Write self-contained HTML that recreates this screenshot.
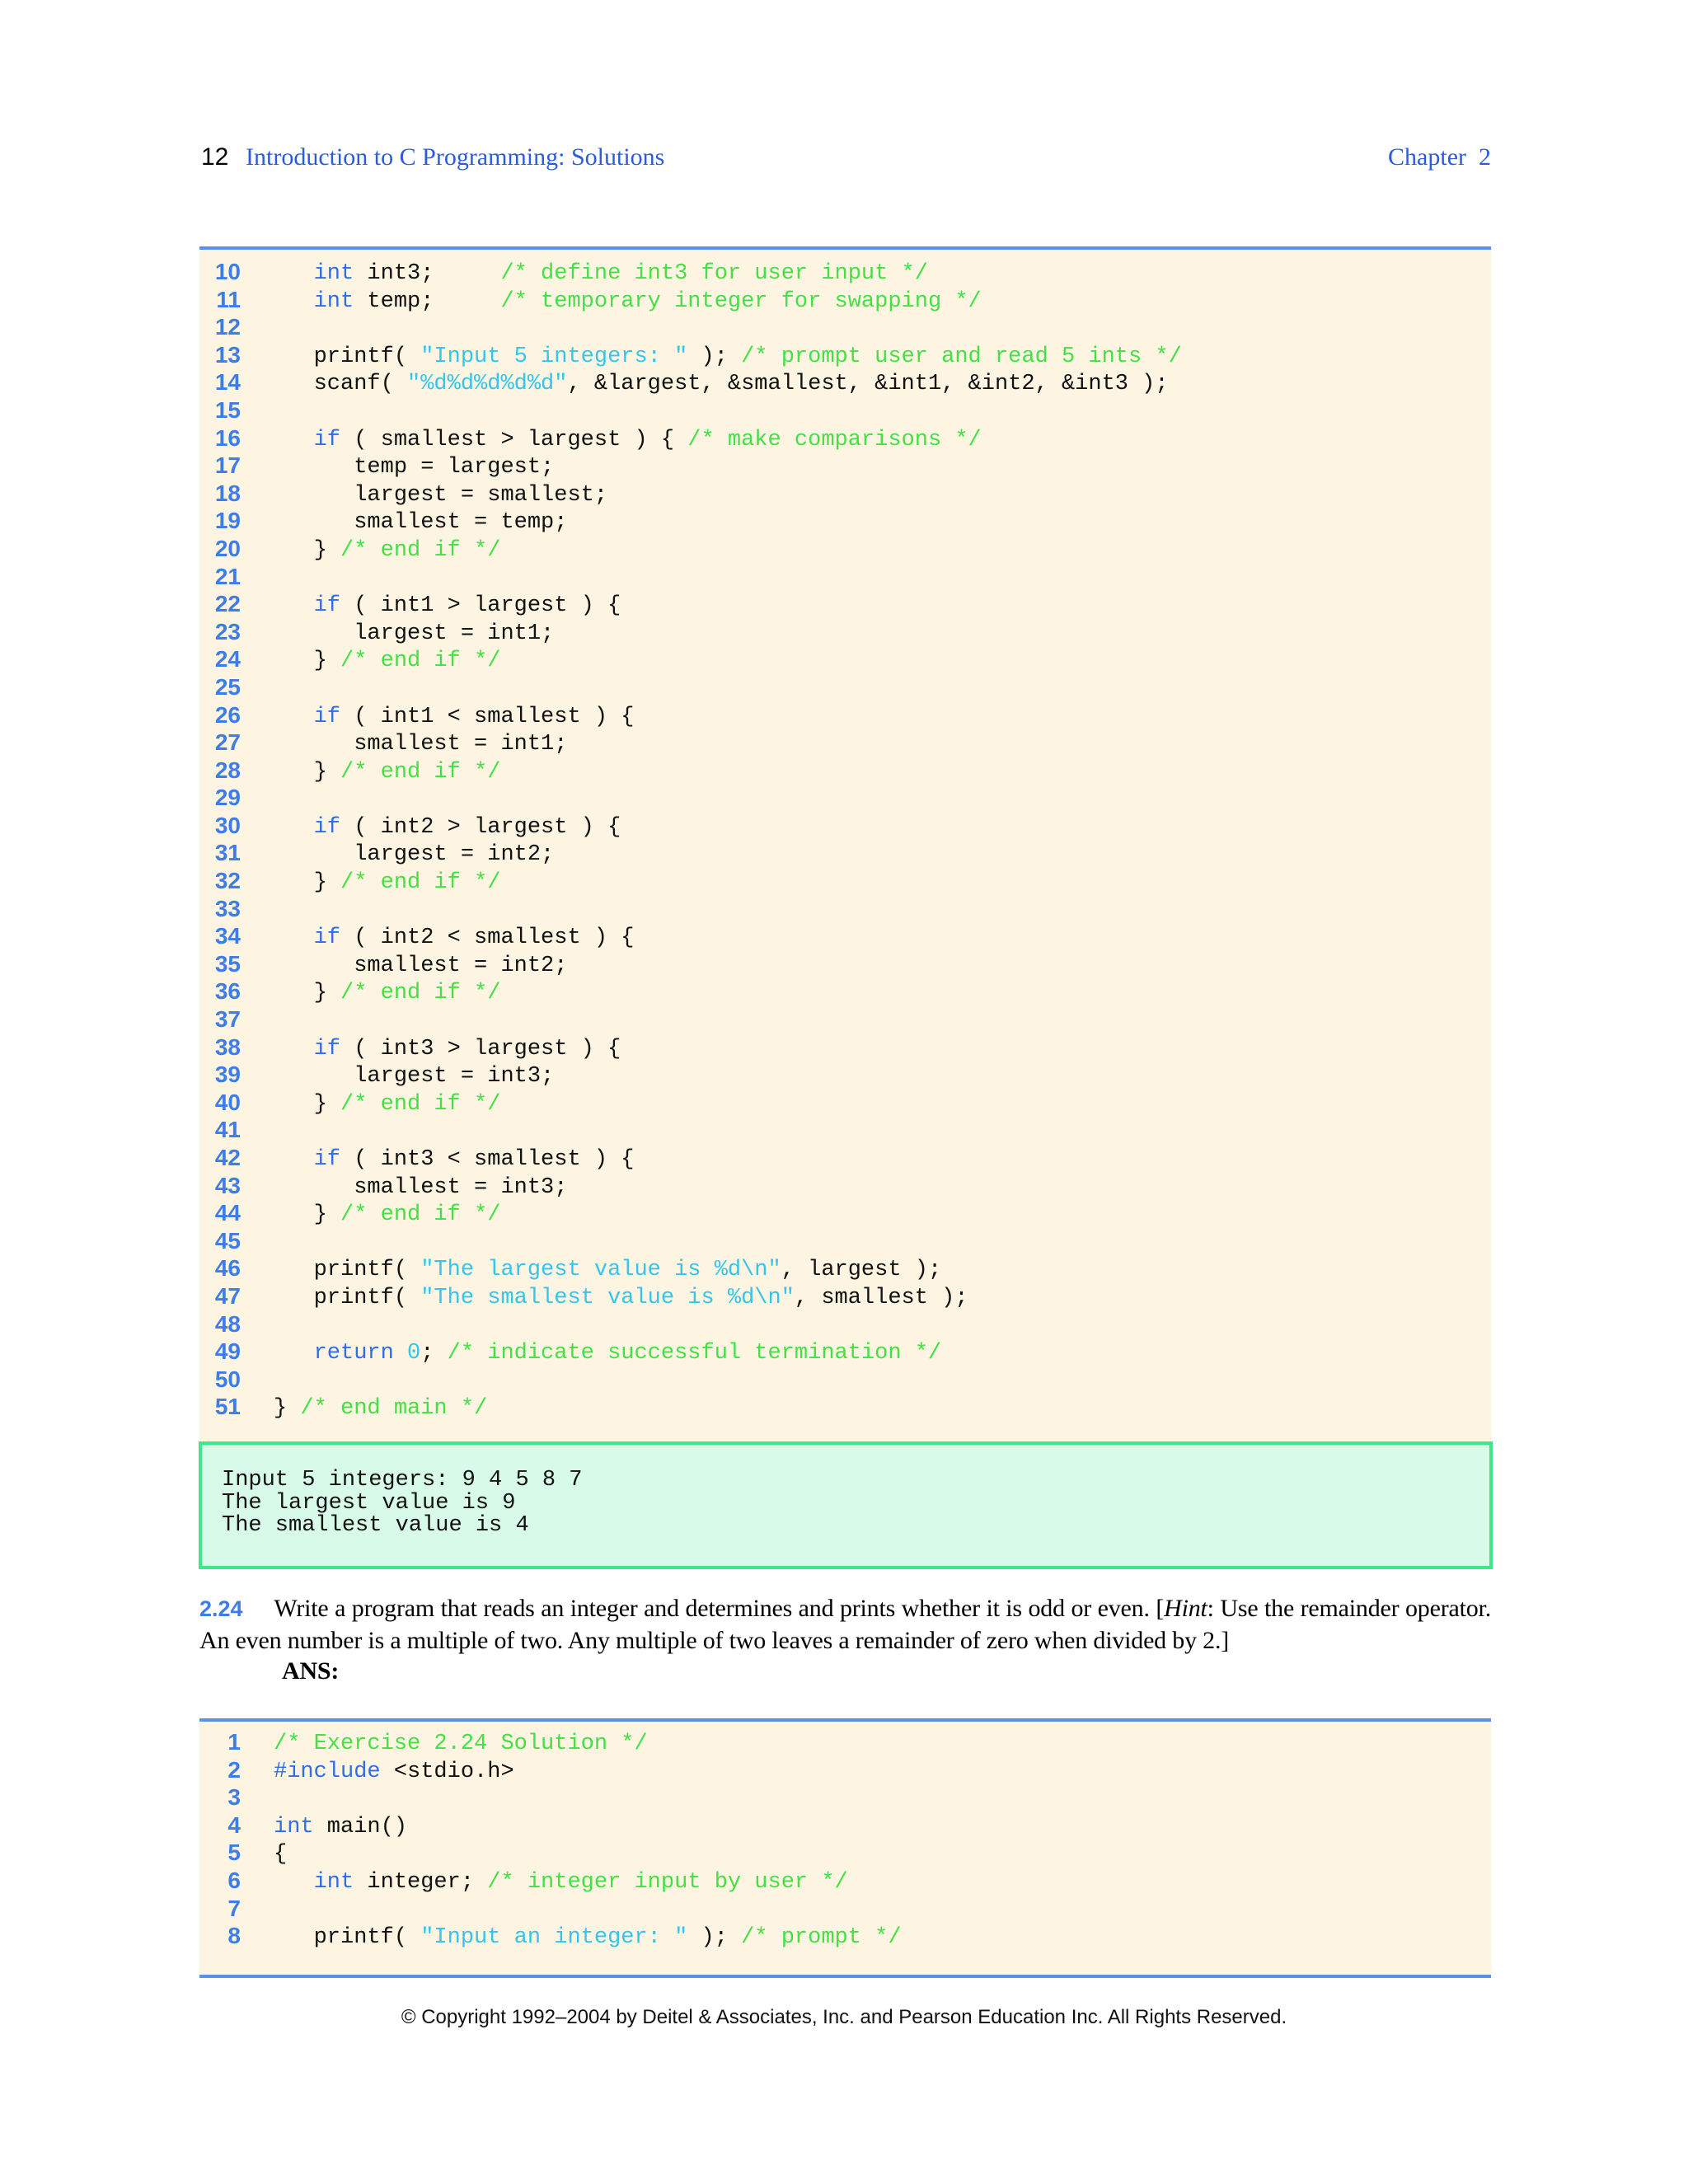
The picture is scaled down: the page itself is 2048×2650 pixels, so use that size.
<!DOCTYPE html>
<html><head><meta charset="utf-8"><style>
body{margin:0;width:2048px;height:2650px;background:#fff;position:relative;overflow:hidden}
.a{position:absolute}
.hd{font-family:"Liberation Serif",serif;font-size:30px;color:#2b5ce0}
.box{position:absolute;left:242px;width:1567px;background:#fdf5e2}
.ln{position:absolute;font-family:"Liberation Sans",sans-serif;font-weight:bold;color:#3d7de8;font-size:28px;text-align:right;width:52px;left:240px;line-height:33.6px;margin:0;white-space:pre}
.code{position:absolute;left:332px;font-family:"Liberation Mono",monospace;font-size:27px;line-height:33.6px;margin:0;white-space:pre;color:#111}
.k{color:#2f6ee6}.c{color:#45e045}.s{color:#35c4ec}
</style></head><body>
<div class="a" style="left:244px;top:174px;font-family:'Liberation Sans',sans-serif;font-size:30px;color:#000">12</div>
<div class="a hd" style="left:298px;top:174px">Introduction to C Programming: Solutions</div>
<div class="a hd" style="right:239px;top:174px">Chapter&nbsp; 2</div>

<div class="box" style="top:299px;height:1451px;border-top:4px solid #5b8fe8"></div>
<pre class="ln" style="top:313px">10
11
12
13
14
15
16
17
18
19
20
21
22
23
24
25
26
27
28
29
30
31
32
33
34
35
36
37
38
39
40
41
42
43
44
45
46
47
48
49
50
51</pre>
<pre class="code" style="top:316px">   <span class="k">int</span> int3;     <span class="c">/* define int3 for user input */</span>
   <span class="k">int</span> temp;     <span class="c">/* temporary integer for swapping */</span>

   printf( <span class="s">"Input 5 integers: "</span> ); <span class="c">/* prompt user and read 5 ints */</span>
   scanf( <span class="s">"%d%d%d%d%d"</span>, &amp;largest, &amp;smallest, &amp;int1, &amp;int2, &amp;int3 );

   <span class="k">if</span> ( smallest &gt; largest ) { <span class="c">/* make comparisons */</span>
      temp = largest;
      largest = smallest;
      smallest = temp;
   } <span class="c">/* end if */</span>

   <span class="k">if</span> ( int1 &gt; largest ) {
      largest = int1;
   } <span class="c">/* end if */</span>

   <span class="k">if</span> ( int1 &lt; smallest ) {
      smallest = int1;
   } <span class="c">/* end if */</span>

   <span class="k">if</span> ( int2 &gt; largest ) {
      largest = int2;
   } <span class="c">/* end if */</span>

   <span class="k">if</span> ( int2 &lt; smallest ) {
      smallest = int2;
   } <span class="c">/* end if */</span>

   <span class="k">if</span> ( int3 &gt; largest ) {
      largest = int3;
   } <span class="c">/* end if */</span>

   <span class="k">if</span> ( int3 &lt; smallest ) {
      smallest = int3;
   } <span class="c">/* end if */</span>

   printf( <span class="s">"The largest value is %d\n"</span>, largest );
   printf( <span class="s">"The smallest value is %d\n"</span>, smallest );

   <span class="k">return</span> <span class="s">0</span>; <span class="c">/* indicate successful termination */</span>

} <span class="c">/* end main */</span></pre>

<div class="a" style="left:241px;top:1749px;width:1562px;height:147px;background:#d7fbe8;border:4px solid #3de88a"></div>
<pre class="code" style="left:269px;top:1783px;line-height:27.5px">Input 5 integers: 9 4 5 8 7
The largest value is 9
The smallest value is 4</pre>

<div class="a" style="left:242px;top:1933px;width:1567px;font-family:'Liberation Serif',serif;font-size:30px;line-height:37.5px;color:#000;text-align:justify;letter-spacing:-0.2px"><span style="font-family:'Liberation Sans',sans-serif;font-weight:bold;color:#3d7de8;font-size:27px;letter-spacing:0">2.24</span>&nbsp;&nbsp;&nbsp;&nbsp;&nbsp;Write a program that reads an integer and determines and prints whether it is odd or even. [<i>Hint</i>: Use the remainder operator. An even number is a multiple of two. Any multiple of two leaves a remainder of zero when divided by 2.]<br><b style="margin-left:100px">ANS:</b></div>

<div class="box" style="top:2085px;height:307px;border-top:4px solid #5b8fe8;border-bottom:4px solid #5b8fe8"></div>
<pre class="ln" style="top:2097px">1
2
3
4
5
6
7
8</pre>
<pre class="code" style="top:2100px"><span class="c">/* Exercise 2.24 Solution */</span>
<span class="k">#include</span> &lt;stdio.h&gt;

<span class="k">int</span> main()
{
   <span class="k">int</span> integer; <span class="c">/* integer input by user */</span>

   printf( <span class="s">"Input an integer: "</span> ); <span class="c">/* prompt */</span></pre>

<div class="a" style="left:0;width:2048px;top:2434px;text-align:center;font-family:'Liberation Sans',sans-serif;font-size:24px;color:#111">© Copyright 1992–2004 by Deitel &amp; Associates, Inc. and Pearson Education Inc. All Rights Reserved.</div>
</body></html>
